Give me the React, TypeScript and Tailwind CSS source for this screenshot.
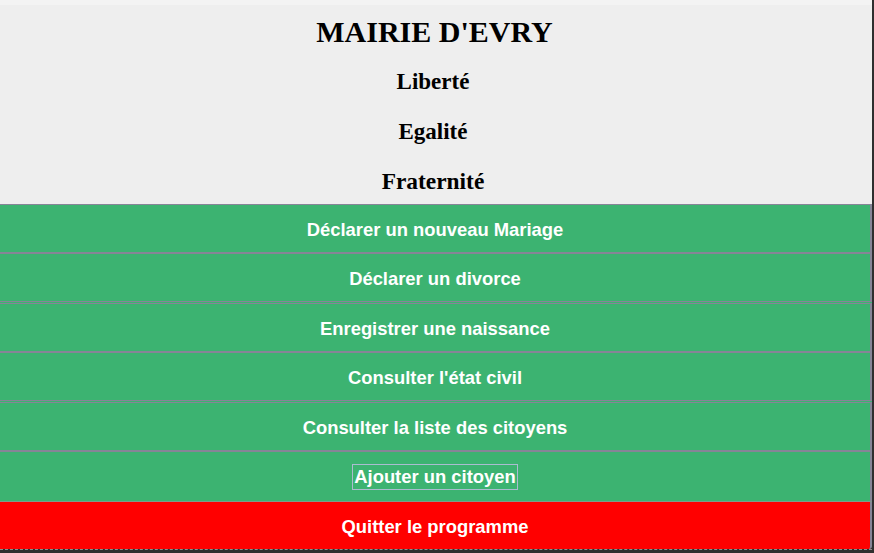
const GREEN = "bg-[#3cb371]";

type Row = { label: string; top: "none" | "one" | "two" | "split"; focus?: boolean };

const ACTIONS: Row[] = [
  { label: "Déclarer un nouveau Mariage", top: "one" },
  { label: "Déclarer un divorce", top: "two" },
  { label: "Enregistrer une naissance", top: "split" },
  { label: "Consulter l'état civil", top: "two" },
  { label: "Consulter la liste des citoyens", top: "split" },
];

const SANS = { fontFamily: '"Liberation Sans", Arial, sans-serif' };

function Divider({ kind }: { kind: Row["top"] }) {
  if (kind === "one") return <div className="h-px bg-[#868597]" />;
  if (kind === "two") return <div className="h-[2px] bg-[#868597]" />;
  if (kind === "split")
    return (
      <div className="flex flex-col">
        <div className="h-px bg-[#868597]" />
        <div className={`h-px ${GREEN}`} />
        <div className="h-px bg-[#868597]" />
      </div>
    );
  return null;
}

function ActionButton({ row }: { row: Row }) {
  return (
    <>
      <Divider kind={row.top} />
      <button
        type="button"
        className={`flex h-[47px] w-full items-center justify-center border-r-2 border-[#868597] pt-[2px] ${GREEN} text-[18.4px] font-bold text-white`}
        style={SANS}
      >
        <span className="leading-[24px]">{row.label}</span>
      </button>
    </>
  );
}

export default function App() {
  return (
    <div className="flex h-[553px] w-[874px] bg-[#2f2f2f]">
      <div className="flex w-[872px] flex-col">
        <div className="h-[5px] bg-[#f3f3f3]" />
        <header
          className="flex h-[199px] flex-col bg-[#eeeeee] text-black"
          style={{ fontFamily: '"Liberation Serif", "Times New Roman", serif' }}
        >
          <div className="flex h-[50px] items-center justify-center pr-[3px] pt-[4px]">
            <h1 className="text-[30px] font-bold leading-none">MAIRIE D'EVRY</h1>
          </div>
          <div className="flex h-[50px] items-center justify-center pr-[6px] pt-[5px] text-[23px] font-bold">Liberté</div>
          <div className="flex h-[50px] items-center justify-center pr-[6px] pt-[5px] text-[23px] font-bold">Egalité</div>
          <div className="flex h-[49px] items-center justify-center pr-[6px] pt-[5px] text-[23.4px] font-bold">Fraternité</div>
        </header>
        {ACTIONS.map((row) => (
          <ActionButton key={row.label} row={row} />
        ))}
        <Divider kind="two" />
        <button
          type="button"
          className={`flex h-[49px] w-full items-center justify-center border-r-2 border-[#868597] pt-[1px] ${GREEN} text-[18.4px] font-bold text-white`}
          style={SANS}
        >
          <span className="border border-[#aabcd0] px-[1px] leading-[24px]">Ajouter un citoyen</span>
        </button>
        <div className="h-px bg-[#7f9a8a]" />
        <button
          type="button"
          className="flex h-[47px] w-full items-center justify-center rounded-br-[3px] border-r-2 border-[#868597] bg-[#ff0000] pt-[2px] text-[18.4px] font-bold text-white"
          style={SANS}
        >
          Quitter le programme
        </button>
        <div className="flex-1 border-t border-dashed border-[#8d8d8d] bg-[#2f2f2f]" />
      </div>
    </div>
  );
}
